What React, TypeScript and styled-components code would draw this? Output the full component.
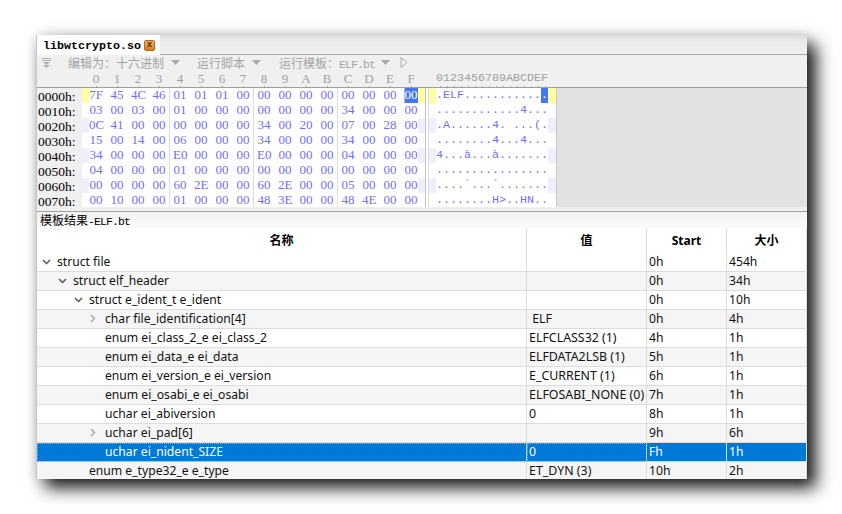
import React from "react"
import styled, { createGlobalStyle } from "styled-components"

const Global = createGlobalStyle`
html, body { margin: 0; padding: 0; background: #fff; }
`

const mono = `"Liberation Mono", "Noto Sans CJK SC", monospace`
const serif = `"Liberation Serif", serif`
const cjk = `"Noto Sans CJK SC", "Liberation Sans", sans-serif`
const ui = `"Noto Sans", "Noto Sans CJK SC", sans-serif`

const Page = styled.div`
  width: 842px;
  height: 514px;
  padding: 35px 0 0 36px;
  box-sizing: border-box;
  overflow: hidden;
`
const Win = styled.div`
  width: 771px;
  height: 444px;
  overflow: hidden;
  box-sizing: border-box;
  border-left: 1px solid #c4c4c4;
  background: #f0f0f0;
  box-shadow: 9px 9px 16px rgba(0, 0, 0, 0.9), 0 0 12px rgba(0, 0, 0, 0.13);
`
const TabStrip = styled.div`
  height: 19px;
  display: flex;
  background: linear-gradient(#dcdcdc, #ececec 40%, #f0f0f0);
  border-bottom: 1px solid #a8a8a8;
`
const Tab = styled.div`
  width: 123px;
  height: 20px;
  box-sizing: border-box;
  padding: 1px 5px 0 6px;
  display: flex;
  align-items: center;
  justify-content: space-between;
  background: #fff;
  font: bold 11.67px ${mono};
  color: #000;
`
const Close = styled.span`
  width: 11px;
  height: 11px;
  border-radius: 2px;
  border: 1px solid #a86a20;
  box-sizing: border-box;
  background: linear-gradient(#f4b45c, #d87c1c);
  font: bold 9px/8px ${mono};
  text-align: center;
  color: #4a2a08;
`
const Toolbar = styled.div`
  height: 15px;
  display: flex;
  align-items: center;
  padding-left: 5px;
  color: #a4a4a4;
`
const ToolText = styled.span<{ $left: number }>`
  margin-left: ${(p) => p.$left}px;
  font: 12px ${cjk};
  white-space: nowrap;
`
const NarrowMono = styled.span`
  font: 11.5px ${mono};
  letter-spacing: -0.9px;
`
const Ruler = styled.div`
  height: 17px;
  display: flex;
  border-bottom: 1px solid #a0a0a0;
  color: #a0a0a0;
`
const RulerBytes = styled.div`
  width: 343px;
  margin-left: 45px;
  padding-left: 7px;
  box-sizing: border-box;
  display: flex;
  gap: 7px;
  font: 13px/18px ${serif};
`
const RulerCell = styled.span<{ $w: number }>`
  width: ${(p) => p.$w}px;
  flex: none;
  text-align: center;
  position: relative;
  &::after {
    content: "";
    position: absolute;
    left: 50%;
    bottom: -1px;
    width: 1px;
    height: 2px;
    background: #a0a0a0;
  }
`
const RulerAscii = styled.div`
  margin-left: 11px;
  display: flex;
  font: 11.67px/17px ${mono};
`
const HexPane = styled.div`
  height: 120px;
  display: flex;
`
const Offsets = styled.div`
  width: 45px;
  flex: none;
  padding: 1px 0 0 1px;
  box-sizing: border-box;
  font: 13.5px/16px ${serif};
  color: #000;
`
const OffsetRow = styled.div`
  height: 15px;
`
const Bytes = styled.div`
  width: 343px;
  height: 119px;
  overflow: hidden;
  flex: none;
  background-color: #fff;
  background-image: linear-gradient(#dcdcdc, #dcdcdc), linear-gradient(#dcdcdc, #dcdcdc),
    linear-gradient(#dcdcdc, #dcdcdc);
  background-size: 1px 100%;
  background-repeat: no-repeat;
  background-position: 87px 0, 171px 0, 255px 0;
`
const Divider = styled.div`
  width: 2px;
  height: 119px;
  flex: none;
  background: #fff;
  border-left: 1px solid #c4c4c4;
  border-right: 1px solid #dcdcdc;
`
const Ascii = styled.div`
  width: 127px;
  height: 119px;
  overflow: hidden;
  flex: none;
  background: #fff;
  border-right: 1px solid #c8c8c8;
`
const EmptyArea = styled.div`
  flex: 1;
  height: 119px;
  background: #e2e2e2;
`
const HexRow = styled.div`
  height: 15px;
  display: flex;
  color: #7070f6;
  font: 13px/14px ${serif};
`
const AsciiRow = styled(HexRow)`
  font: 11.67px/14px ${mono};
`
const Edge = styled.span<{ $w: number; $tone?: string }>`
  width: ${(p) => p.$w}px;
  flex: none;
  background: ${(p) => (p.$tone === "yellow" ? "#ffffa0" : p.$tone === "band" ? "#eeeefd" : "transparent")};
`
const ByteCells = styled.div`
  display: flex;
  gap: 7px;
`
const ByteCell = styled.span<{ $sel?: boolean }>`
  width: 14px;
  text-align: center;
  white-space: nowrap;
  background: ${(p) => (p.$sel ? "#4478f0" : "transparent")};
  box-shadow: ${(p) => (p.$sel ? "inset 1px 0 #b4b4b4" : "none")};
  color: ${(p) => (p.$sel ? "#fff" : "inherit")};
`
const Char = styled.span<{ $sel?: boolean }>`
  width: 7px;
  flex: none;
  text-align: center;
  background: ${(p) => (p.$sel ? "#4478f0" : "transparent")};
  color: ${(p) => (p.$sel ? "#fff" : "inherit")};
`
const PaneFoot = styled.div`
  height: 3px;
  background: #f0f0f0;
  border-bottom: 1px solid #a0a0a0;
`
const ResultLabel = styled.div`
  height: 16px;
  padding-left: 3px;
  background: linear-gradient(#f2f2f2, #fafafa);
  color: #000;
  font: 12px/16px ${cjk};
`
const Grid = styled.div<{ $h: number; $bg?: string; $sel?: boolean }>`
  height: ${(p) => p.$h}px;
  box-sizing: border-box;
  display: grid;
  grid-template-columns: 490px 120px 80px 80px;
  background: ${(p) => p.$bg || "#fff"};
  color: ${(p) => (p.$sel ? "#fff" : "#111")};
  font: 12.15px/17px ${ui};
  border-bottom: ${(p) => (p.$h === 19 ? "1px solid #dcdcdc" : "none")};
`
const HeadCell = styled.div`
  text-align: center;
  font: bold 12px/25px ${ui};
  color: #000;
  border-right: 1px solid #dcdcdc;
  box-sizing: border-box;
`
const Cell = styled.div<{ $sel?: boolean; $focus?: boolean }>`
  box-sizing: border-box;
  padding-left: 2px;
  white-space: pre;
  height: 19px;
  margin-bottom: -1px;
  border-right: 1px solid ${(p) => (p.$sel ? "#cfe4f7" : "#dcdcdc")};
  outline: ${(p) => (p.$focus ? "1px dotted #f0a040" : "none")};
  outline-offset: -1px;
`
const ValueCell = styled(Cell)`
  font-size: 12.4px;
`
const NameCell = styled(Cell)<{ $depth: number }>`
  display: flex;
  align-items: center;
  padding: 0 0 2px ${(p) => 20 + p.$depth * 16}px;
  position: relative;
`
const Arrow = styled.svg`
  position: absolute;
  margin-left: -15px;
`

const hexData = [
  "7F 45 4C 46 01 01 01 00 00 00 00 00 00 00 00 00",
  "03 00 03 00 01 00 00 00 00 00 00 00 34 00 00 00",
  "0C 41 00 00 00 00 00 00 34 00 20 00 07 00 28 00",
  "15 00 14 00 06 00 00 00 34 00 00 00 34 00 00 00",
  "34 00 00 00 E0 00 00 00 E0 00 00 00 04 00 00 00",
  "04 00 00 00 01 00 00 00 00 00 00 00 00 00 00 00",
  "00 00 00 00 60 2E 00 00 60 2E 00 00 05 00 00 00",
  "00 10 00 00 01 00 00 00 48 3E 00 00 48 4E 00 00",
]
const asciiData = [
  ".ELF............",
  "............4...",
  ".A......4. ...(.",
  "........4...4...",
  "4...à...à.......",
  "................",
  "....`...`.......",
  "........H>..HN..",
]
const rulerChars = "0123456789ABCDEF".split("")

type Row = { name: string; depth: number; value?: string; start: string; size: string; arrow?: "open" | "closed"; sel?: boolean }

const rows: Row[] = [
  { name: "struct file", depth: 0, start: "0h", size: "454h", arrow: "open" },
  { name: "struct elf_header", depth: 1, start: "0h", size: "34h", arrow: "open" },
  { name: "struct e_ident_t e_ident", depth: 2, start: "0h", size: "10h", arrow: "open" },
  { name: "char file_identification[4]", depth: 3, value: " ELF", start: "0h", size: "4h", arrow: "closed" },
  { name: "enum ei_class_2_e ei_class_2", depth: 3, value: "ELFCLASS32 (1)", start: "4h", size: "1h" },
  { name: "enum ei_data_e ei_data", depth: 3, value: "ELFDATA2LSB (1)", start: "5h", size: "1h" },
  { name: "enum ei_version_e ei_version", depth: 3, value: "E_CURRENT (1)", start: "6h", size: "1h" },
  { name: "enum ei_osabi_e ei_osabi", depth: 3, value: "ELFOSABI_NONE (0)", start: "7h", size: "1h" },
  { name: "uchar ei_abiversion", depth: 3, value: "0", start: "8h", size: "1h" },
  { name: "uchar ei_pad[6]", depth: 3, start: "9h", size: "6h", arrow: "closed" },
  { name: "uchar ei_nident_SIZE", depth: 3, value: "0", start: "Fh", size: "1h", sel: true },
  { name: "enum e_type32_e e_type", depth: 2, value: "ET_DYN (3)", start: "10h", size: "2h" },
]

const DropArrow = ({ left }: { left: number }) => (
  <svg width="9" height="5" viewBox="0 0 9 5" style={{ marginLeft: left }}>
    <path d="M0 0h9L4.5 5z" fill="#a8a8a8" />
  </svg>
)

const App = () => {
  return (
    <Page>
      <Global />
      <Win>
        <TabStrip>
          <Tab>
            libwtcrypto.so
            <Close>x</Close>
          </Tab>
        </TabStrip>
        <Toolbar>
          <svg width="9" height="10" viewBox="0 0 9 10">
            <path d="M0 .5h9M0 2.500h9" stroke="#b0b0b0" fill="none" />
            <path d="M1 4h7L4.500 7zM1 7h7L4.500 10z" fill="#b0b0b0" />
          </svg>
          <ToolText $left={17}>编辑为：十六进制</ToolText>
          <DropArrow left={7} />
          <ToolText $left={17}>运行脚本</ToolText>
          <DropArrow left={7} />
          <ToolText $left={18}>
            运行模板：<NarrowMono>ELF.bt</NarrowMono>
          </ToolText>
          <DropArrow left={6} />
          <svg width="8" height="11" viewBox="0 0 8 11" style={{ marginLeft: 10 }}>
            <path d="M1 .5v10L7 5.500z" fill="none" stroke="#a8a8a8" />
          </svg>
        </Toolbar>
        <Ruler>
          <RulerBytes>
            {rulerChars.map((c) => (
              <RulerCell $w={14} key={c}>{c}</RulerCell>
            ))}
          </RulerBytes>
          <RulerAscii>
            {rulerChars.map((c) => (
              <RulerCell $w={7} key={c}>{c}</RulerCell>
            ))}
          </RulerAscii>
        </Ruler>
        <HexPane>
          <Offsets>
            {hexData.map((_, i) => (
              <OffsetRow key={i}>{`00${i}0h:`}</OffsetRow>
            ))}
          </Offsets>
          <Bytes>
            {hexData.map((line, i) => {
              const tone = i === 0 ? "yellow" : i % 2 === 0 ? "band" : undefined
              return (
                <HexRow key={i}>
                  <Edge $w={7} $tone={tone} />
                  <ByteCells>
                    {line.split(" ").map((b, j) => (
                      <ByteCell key={j} $sel={i === 0 && j === 15}>{b}</ByteCell>
                    ))}
                  </ByteCells>
                  <Edge $w={7} $tone={tone} />
                </HexRow>
              )
            })}
          </Bytes>
          <Divider />
          <Ascii>
            {asciiData.map((line, i) => {
              const tone = i === 0 ? "yellow" : i % 2 === 0 ? "band" : undefined
              return (
                <AsciiRow key={i}>
                  <Edge $w={7} $tone={tone} />
                  {line.split("").map((c, j) => (
                    <Char key={j} $sel={i === 0 && j === 15}>{c}</Char>
                  ))}
                  <Edge $w={8} $tone={tone} />
                </AsciiRow>
              )
            })}
          </Ascii>
          <EmptyArea />
        </HexPane>
        <PaneFoot />
        <ResultLabel>
          模板结果<NarrowMono>-ELF.bt</NarrowMono>
        </ResultLabel>
        <Grid $h={25}>
          <HeadCell>名称</HeadCell>
          <HeadCell>值</HeadCell>
          <HeadCell>Start</HeadCell>
          <HeadCell>大小</HeadCell>
        </Grid>
        {rows.map((r, i) => (
          <Grid key={r.name} $h={19} $sel={r.sel} $bg={r.sel ? "#0078d7" : i % 2 === 1 ? "#f5f5f5" : "#fff"}>
            <NameCell $depth={r.depth} $sel={r.sel} $focus={r.sel}>
              {r.arrow === "open" && (
                <Arrow width="9" height="6" viewBox="0 0 9 6">
                  <path d="M1 1l3.500 3.500L8 1" fill="none" stroke="#555" strokeWidth="1.500" />
                </Arrow>
              )}
              {r.arrow === "closed" && (
                <Arrow width="6" height="9" viewBox="0 0 6 9">
                  <path d="M1 1l3.500 3.500L1 8" fill="none" stroke="#aaa" strokeWidth="1.500" />
                </Arrow>
              )}
              {r.name}
            </NameCell>
            <ValueCell $sel={r.sel} $focus={r.sel}>{r.value}</ValueCell>
            <Cell $sel={r.sel}>{r.start}</Cell>
            <Cell $sel={r.sel}>{r.size}</Cell>
          </Grid>
        ))}
      </Win>
    </Page>
  )
}

export default App
